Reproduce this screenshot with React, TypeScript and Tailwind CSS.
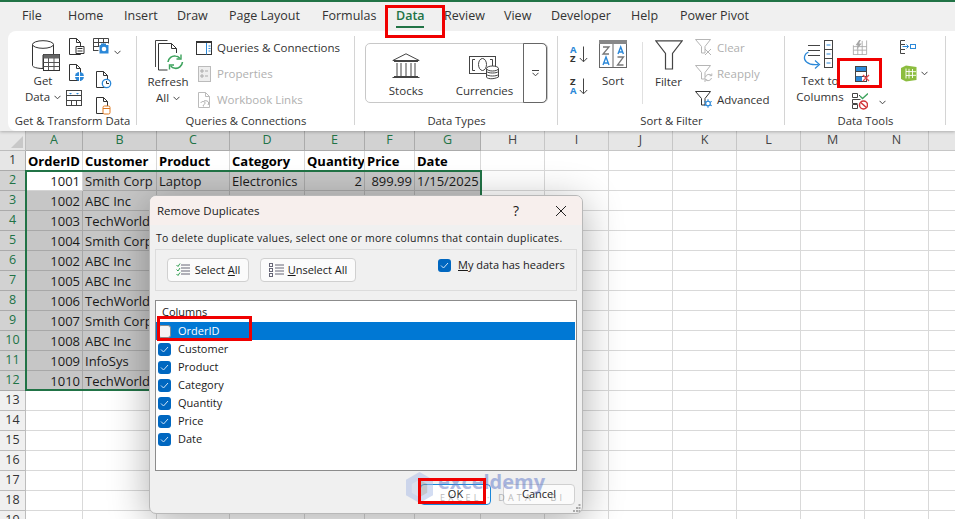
import React from "react";

const UI = "font-['Open_Sans','Noto_Sans',sans-serif]";

function Doc({ children, w = 17, h = 18 }: { children?: React.ReactNode; w?: number; h?: number }) {
  return (
    <svg width={w} height={h} viewBox="0 0 17 18" fill="none" className="block">
      <path d="M1.5 .5h7l4 4v12h-11z" fill="#fff" stroke="#333" />
      <path d="M8.5 .5v4h4" stroke="#333" />
      {children}
    </svg>
  );
}

const Dn = ({ c = "#444" }: { c?: string }) => (
  <svg width="7" height="5" viewBox="0 0 7 5" fill="none" className="inline-block">
    <path d="M.5 .8 3.5 3.8 6.5 .8" stroke={c} />
  </svg>
);

function Group({ w, label, children, border = true }: { w: number; label: string; children: React.ReactNode; border?: boolean }) {
  return (
    <div className="relative flex shrink-0 flex-col" style={{ width: w }}>
      <div className="flex h-[77px] shrink-0">{children}</div>
      <div className="text-center text-[11.3px] leading-[16px] text-[#333]">{label}</div>
      {border && <div className="absolute right-0 top-0 h-[89px] w-px bg-[#d4d4d4]" />}
    </div>
  );
}

const GetDataIcon = () => (
  <svg width="28" height="31" viewBox="0 0 28 31" fill="none">
    <path d="M.5 4.5v21c0 1.7 4.8 3 10.500 3V15h10.500V4.500" fill="#fff" stroke="#333" />
    <ellipse cx="11" cy="4.500" rx="10.500" ry="3.800" fill="#fff" stroke="#333" />
    <rect x="11.500" y="14.500" width="16" height="16" fill="#fff" stroke="#333" />
    <rect x="11.500" y="14.500" width="16" height="4" fill="#666" />
    <path d="M11.500 22.500h16M11.500 26.500h16M16.500 18v12M22 18v12" stroke="#555" />
  </svg>
);

const CameraTable = () => (
  <svg width="17" height="18" viewBox="0 0 17 18" fill="none">
    <path d="M.5 13V.5h15v5M.5 4.500h15M.5 8.500h6M5.500 .5v8M10.500 .5v5M.5 12.500h5" stroke="#444" />
    <rect x="6.500" y="7" width="9" height="8.500" fill="#2b88d8" />
    <circle cx="11" cy="11" r="2.300" fill="#fff" />
    <rect x="8" y="5.500" width="5" height="2" fill="#2b88d8" />
  </svg>
);

const RefreshIcon = () => (
  <svg width="29" height="34" viewBox="0 0 29 34" fill="none">
    <path d="M.5 27V.5h12" stroke="#444" />
    <path d="M3.500 30V3.500h13l5 5V13" fill="#fff" stroke="#333" />
    <path d="M16.500 3.500v5h5" stroke="#333" />
    <path d="M3.500 30h9" stroke="#333" />
    <path d="M13 22c.5-4 4-6.500 7.500-6 1.800.2 3.200 1 4.300 2.200M27.500 22c-.4 4-4 6.800-7.500 6.300-1.800-.2-3.200-1-4.300-2.300" stroke="#3da35d" strokeWidth="1.600" />
    <path d="M26 14.500v4.500h-4.500M14.500 29.500V25H19" stroke="#3da35d" strokeWidth="1.400" />
  </svg>
);

const SortAZ = ({ flip }: { flip?: boolean }) => (
  <div className="relative flex h-[18px] w-[18px] items-center">
    <div className="flex w-[9px] flex-col font-bold text-[9.5px] leading-[9px]">
      <span className={flip ? "text-[#333]" : "text-[#2b88d8]"}>{flip ? "Z" : "A"}</span>
      <span className={flip ? "text-[#2b88d8]" : "text-[#333]"}>{flip ? "A" : "Z"}</span>
    </div>
    <svg width="9" height="17" viewBox="0 0 9 17" fill="none"><path d="M4.500 .5v15M.8 12l3.700 3.800L8.200 12" stroke="#444" /></svg>
  </div>
);

const SortIcon = () => (
  <svg width="28" height="28" viewBox="0 0 28 28" fill="none">
    <rect x=".5" y=".5" width="27" height="27" fill="#fff" stroke="#666" />
    <rect x="0" y="0" width="28" height="4" fill="#888" />
    <path d="M14 4v24" stroke="#666" />
    <path d="M4 7h6L4 14h6" stroke="#777" strokeWidth="1.300" />
    <path d="M19 14l2.700-7 2.700 7M20 12h3.400" stroke="#2b88d8" strokeWidth="1.400" />
    <path d="M4 25l3-8 3 8M5 23h4" stroke="#2b88d8" strokeWidth="1.400" />
    <path d="M18.500 17h6l-6 8h6" stroke="#777" strokeWidth="1.300" />
  </svg>
);

const Funnel = ({ c = "#444", w = 28, h = 30 }: { c?: string; w?: number; h?: number }) => (
  <svg width={w} height={h} viewBox="0 0 28 30" fill="none">
    <path d="M.8 .8h26.400L17.500 13.500V29h-7V13.500z" fill="#fff" stroke={c} strokeWidth="1.200" />
  </svg>
);

const SmallFunnel = ({ kind }: { kind: "clear" | "reapply" | "advanced" }) => (
  <svg width="18" height="18" viewBox="0 0 18 18" fill="none">
    <path d="M.5 .5h15L10 7.500V14H6.500V7.500z" fill="#fff" stroke={kind === "advanced" ? "#333" : "#b5b5b5"} />
    {kind === "clear" && <path d="M10 10l6 6M16 10l-6 6" stroke="#b5b5b5" />}
    {kind === "reapply" && <path d="M10.500 12a3.500 3.500 0 0 1 6-1.500M16.500 13a3.500 3.500 0 0 1-6 1.500M16.800 8.500v2.200h-2.200M10 17v-2.200h2.200" stroke="#b5b5b5" />}
    {kind === "advanced" && (
      <g stroke="#2b88d8" strokeWidth="1.100">
        <circle cx="13" cy="12.500" r="2.300" />
        <path d="M13 8.300v1.900M13 14.800v1.900M9.300 10.400l1.700 1M15 13.700l1.700 1M9.300 14.700l1.700-1M15 11.400l1.700-1" />
      </g>
    )}
  </svg>
);

const TextToCols = () => (
  <svg width="30" height="31" viewBox="0 0 30 31" fill="none">
    <path d="M5 5.500h12M5 10.500h12M5 15.500h12" stroke="#444" />
    <rect x="21.500" y=".5" width="8" height="27" fill="#fff" stroke="#444" />
    <path d="M21.500 9.500h8M21.500 18.500h8" stroke="#444" />
    <path d="M23.500 5h4M23.500 14h4M23.500 23h4" stroke="#2b88d8" />
    <path d="M5.500 12c-4.500 2-5.500 7-2 10 3 2.500 8 3 12 2.500" stroke="#2b88d8" strokeWidth="1.200" />
    <path d="M12 20.500l4.500 4-4.500 4" stroke="#2b88d8" strokeWidth="1.200" />
  </svg>
);

const FlashFill = () => (
  <svg width="16" height="17" viewBox="0 0 16 17" fill="none">
    <path d="M.5 7.500h15M.5 11.500h15M5.500 4v13M10.500 1v16M.5 16.500h15v-16M.5 6v11" stroke="#aaa" />
    <path d="M7 0 3 6h3L4 11l6-7H7l2-4z" fill="#a6a6a6" />
  </svg>
);

const RemoveDup = () => (
  <svg width="15" height="16" viewBox="0 0 15 16" fill="none">
    <rect x=".5" y=".5" width="11" height="15" fill="#fff" stroke="#444" />
    <rect x="1" y="1" width="10" height="4.500" fill="#2b88d8" />
    <path d="M.5 5.500h11M.5 10.500h11" stroke="#444" />
    <rect x="1" y="10.500" width="6" height="4.500" fill="#2b88d8" />
    <path d="M8 9l6 6M14 9l-6 6" stroke="#e5484d" strokeWidth="1.300" />
  </svg>
);

const Validate = () => (
  <svg width="16" height="17" viewBox="0 0 16 17" fill="none">
    <path d="M.5 .5h5v4h-5zM7 2.500h1M.5 6.500h8M.5 11.500h5v4h-5zM.5 6.500v4h5" stroke="#444" />
    <path d="M8 3l2.500 2.500L16 .5" stroke="#3da35d" strokeWidth="1.300" />
    <circle cx="11.500" cy="12" r="4" fill="#fff" stroke="#d13438" strokeWidth="1.500" />
    <path d="M8.800 9.500l5.500 5" stroke="#d13438" strokeWidth="1.500" />
  </svg>
);

const Consolidate = () => (
  <svg width="16" height="14" viewBox="0 0 16 14" fill="none">
    <path d="M5 .5H.5v4H5M5 9.500H.5v4H5M.5 4.500v5" stroke="#444" />
    <rect x="10.500" y="4.500" width="5" height="4" stroke="#2b88d8" />
    <path d="M2.500 6.500h6M6.500 4.500l2 2-2 2" stroke="#2b88d8" />
  </svg>
);

const PowerCube = () => (
  <svg width="17" height="17" viewBox="0 0 17 17" fill="none">
    <path d="M1 3l5-2.500 10.500 1.500v13L6 16.500 1 14z" fill="#8cbd3f" />
    <path d="M6 3.500v10M9 3.800v9.700M12.500 4v9M6 6.500l10 .2M6 10.500l10-.2" stroke="#fff" strokeWidth=".9" />
  </svg>
);

const Bank = () => (
  <svg width="28" height="25" viewBox="0 0 28 25" fill="none">
    <path d="M14 .8 .8 7.500h26.400zM2 8.500h24M2 23.500h24M.5 24.500h27M5 10v13M9 10v13M14 10v13M19 10v13M23 10v13" stroke="#444" />
  </svg>
);

const Currency = () => (
  <svg width="31" height="25" viewBox="0 0 31 25" fill="none">
    <rect x=".5" y=".5" width="26" height="17" fill="#fff" stroke="#444" />
    <path d="M6 3.500H3.500v11H6M21 3.500h2.500v7" stroke="#444" />
    <ellipse cx="13.500" cy="8.500" rx="4" ry="6" stroke="#444" />
    <path d="M17.500 12.500v8.500c0 1.500 6 3 12 0v-8.500" fill="#fff" stroke="#444" />
    <ellipse cx="23.500" cy="12.500" rx="6" ry="2.500" fill="#fff" stroke="#444" />
    <path d="M17.500 15.500c2 2 10 2 12 0M17.500 18.500c2 2 10 2 12 0" stroke="#444" />
  </svg>
);

function SmallBtn({ icon, text, disabled }: { icon: React.ReactNode; text: string; disabled?: boolean }) {
  return (
    <div className={`flex h-[26px] shrink-0 items-center gap-[4px] text-[11.5px] ${disabled ? "text-[#b0b0b0]" : "text-[#333]"}`}>
      <div className="flex w-[18px] justify-center">{icon}</div>
      <span className="whitespace-nowrap">{text}</span>
    </div>
  );
}

const Tabs: [string, number][] = [
  ["File", 46], ["Home", 56], ["Insert", 53], ["Draw", 52], ["Page Layout", 93], ["Formulas", 74], ["Data", 48],
  ["Review", 60], ["View", 47], ["Developer", 80], ["Help", 49], ["Power Pivot", 80],
];

function Ribbon() {
  return (
    <div className="relative z-10 bg-[#f0f0f0] shadow-[0_1px_3px_rgba(0,0,0,0.25)]">
      <div className="flex h-[31px] items-center border-t-2 border-[#217346] pl-[22px] text-[12.5px] text-[#333]">
        {Tabs.map(([t, w]) => (
          <div key={t} className={`relative shrink-0 ${t === "Data" ? "font-semibold text-[#217346]" : ""}`} style={{ width: w }}>
            {t}
            {t === "Data" && <div className="absolute left-0 top-[19px] h-[2px] w-[28px] bg-[#217346]" />}
          </div>
        ))}
      </div>
      <div className="ml-[8px] flex h-[100px] rounded-l-[8px] bg-white pt-[5px]">
        <Group w={129} label="Get & Transform Data">
          <div className="ml-[13px] mt-[4px] flex w-[44px] flex-col items-center text-[11.5px] leading-[16px] text-[#333]">
            <div className="ml-[5px]"><GetDataIcon /></div>
            <div className="mt-[2px]">Get</div>
            <div className="flex items-center gap-1">Data <Dn /></div>
          </div>
          <div className="ml-[3px] flex w-[25px] flex-col items-start gap-[8px] pt-[2px]">
            <Doc><path d="M8 8.500h8v7H8z" fill="#fff" stroke="#333" /><path d="M9.500 10.500h5M9.500 13h5" stroke="#333" /></Doc>
            <Doc><circle cx="11.500" cy="12.500" r="4.500" fill="#2b88d8" /><path d="M7 12.500h9M11.500 8v9" stroke="#fff" /></Doc>
            <svg width="16" height="17" viewBox="0 0 16 17" fill="none" className="-ml-[2px]">
              <rect x=".5" y=".5" width="15" height="15" stroke="#444" fill="#fff" />
              <path d="M.5 5.500h15M.5 10.500h15M5.500 10.500v5M10.500 10.500v5" stroke="#444" />
              <path d="M3 3h3l-1.500 1.500zM10 3h3l-1.500 1.500z" fill="#2b88d8" />
            </svg>
          </div>
          <div className="flex flex-col items-start gap-[8px] pt-[2px]">
            <div className="flex items-start gap-[4px]"><CameraTable /><div className="mt-[1px]"><Dn /></div></div>
            <div className="ml-[2px]"><Doc><circle cx="11.500" cy="12.500" r="4.200" fill="#fff" stroke="#2b88d8" strokeWidth="1.300" /><path d="M11.500 10v2.500h2.500" stroke="#333" /></Doc></div>
            <div className="ml-[2px]"><Doc><rect x="8" y="9" width="7" height="8" rx="1.500" fill="#fff" stroke="#e07a1f" /><path d="M8 11.500h7" stroke="#e07a1f" /></Doc></div>
          </div>
        </Group>
        <Group w={218} label="Queries & Connections">
          <div className="ml-[11px] flex w-[40px] flex-col items-center text-[11.5px] leading-[16px] text-[#333]">
            <div className="mt-[4px] ml-[2px]"><RefreshIcon /></div>
            <div className="whitespace-nowrap">Refresh</div>
            <div className="flex items-center gap-1">All <Dn /></div>
          </div>
          <div className="-mt-px ml-[7px] flex flex-col">
            <SmallBtn text="Queries & Connections" icon={
              <svg width="16" height="14" viewBox="0 0 16 14" fill="none"><rect x=".5" y=".5" width="15" height="13" stroke="#333" /><rect x="0" y="0" width="16" height="2" fill="#333" /><path d="M10.500 2v11.500" stroke="#2b88d8" /><path d="M12.500 5h2M12.500 7.500h2M12.500 10h2" stroke="#2b88d8" /></svg>
            } />
            <SmallBtn disabled text="Properties" icon={
              <svg width="13" height="16" viewBox="0 0 13 16" fill="none"><rect x=".5" y=".5" width="12" height="15" fill="#eee" stroke="#bbb" /><path d="M3 4h2v2H3zM7 5h3M3 9h2v2H3zM7 10h3" stroke="#aaa" /></svg>
            } />
            <SmallBtn disabled text="Workbook Links" icon={
              <svg width="15" height="17" viewBox="0 0 15 17" fill="none"><path d="M1.500.5h7l4 4v11h-11z" stroke="#bbb" /><path d="M8.500.5v4h4" stroke="#bbb" /><path d="M4 11c0-2 4-2 4 0s-4 3-1 3M7 9c3-1 6 1 4 4" stroke="#aaa" /></svg>
            } />
          </div>
        </Group>
        <Group w={203} label="Data Types">
          <div className="ml-[10px] mt-[7px] flex h-[60px] w-[183px] rounded-[5px] border border-[#c8c8c8]">
            <div className="flex w-[80px] flex-col items-center pt-[9px] text-[11.5px] leading-[16px] text-[#333]">
              <Bank />
              <div className="mt-[5px]">Stocks</div>
            </div>
            <div className="flex w-[77px] flex-col items-center pt-[12px] text-[11.5px] leading-[16px] text-[#333]">
              <Currency />
              <div className="mt-[2px]">Currencies</div>
            </div>
            <div className="-mt-px -mb-px flex w-[24px] flex-col items-center justify-center rounded-r-[5px] border border-[#666]">
              <div className="mb-[1px] h-px w-[7px] bg-[#444]" />
              <Dn />
            </div>
          </div>
        </Group>
        <Group w={227} label="Sort & Filter">
          <div className="flex w-[83px]">
            <div className="ml-[12px] flex flex-col gap-[14px] pt-[9px]">
              <SortAZ />
              <SortAZ flip />
            </div>
            <div className="ml-[11px] flex flex-col items-center pt-[4px] text-[11.5px] text-[#333]">
              <SortIcon />
              <div className="mt-[4px]">Sort</div>
            </div>
          </div>
          <div className="relative flex w-[54px] flex-col items-center border-l border-transparent pt-[4px] text-[11.5px] text-[#333]">
            <div className="absolute left-0 top-[6px] h-[62px] w-px bg-[#e0e0e0]" />
            <Funnel />
            <div className="mt-[3px]">Filter</div>
          </div>
          <div className="-mt-px flex flex-col">
            <SmallBtn disabled text="Clear" icon={<SmallFunnel kind="clear" />} />
            <SmallBtn disabled text="Reapply" icon={<SmallFunnel kind="reapply" />} />
            <SmallBtn text="Advanced" icon={<SmallFunnel kind="advanced" />} />
          </div>
        </Group>
        <Group w={161} label="Data Tools">
          <div className="ml-[9px] flex w-[52px] flex-col items-center text-[11.5px] leading-[16px] text-[#333]">
            <div className="mr-[5px] mt-[4px]"><TextToCols /></div>
            <div className="mt-[2px] whitespace-nowrap">Text to</div>
            <div className="whitespace-nowrap">Columns</div>
          </div>
          <div className="ml-[4px] flex w-[38px] flex-col pt-[4px] pl-[2px]">
            <FlashFill />
            <div className="ml-[3px] mt-[11px]"><RemoveDup /></div>
            <div className="mt-[7px] flex items-center gap-[5px]"><Validate /><div className="ml-[6px]"><Dn /></div></div>
          </div>
          <div className="ml-[12px] flex flex-col gap-[11px] pt-[4px]">
            <Consolidate />
            <div className="flex items-center gap-[4px]"><PowerCube /><Dn /></div>
          </div>
        </Group>
        <div className="flex-1" />
      </div>
    </div>
  );
}

const cols = [57, 74, 73, 75, 60, 50, 66, 64, 64, 64, 64, 64, 64, 64, 64];
const letters = ["A", "B", "C", "D", "E", "F", "G", "H", "I", "J", "K", "L", "M", "N", ""];
const headers = ["OrderID", "Customer", "Product", "Category", "Quantity", "Price", "Date"];
const rows: [number, string][] = [
  [1001, "Smith Corp"], [1002, "ABC Inc"], [1003, "TechWorld"], [1004, "Smith Corp"], [1002, "ABC Inc"], [1005, "ABC Inc"],
  [1006, "TechWorld"], [1007, "Smith Corp"], [1008, "ABC Inc"], [1009, "InfoSys"], [1010, "TechWorld"],
];
const second = ["Laptop", "Electronics", "2", "899.99", "1/15/2025"];

function Sheet() {
  const cellText = "text-[13px] leading-[19px] font-['Open_Sans',sans-serif] text-[#1a1a1a]";
  const nRows = 19;
  return (
    <div className="relative">
      <div className="grid grid-cols-[26px_57px_74px_73px_75px_60px_50px_66px_64px_64px_64px_64px_64px_64px_64px_64px] auto-rows-[20px]">
        <div className="relative border-b border-r border-[#bdbdbd] bg-[#e6e6e6]">
          <div className="absolute bottom-[2px] right-[2px] h-0 w-0 border-b-[12px] border-l-[12px] border-b-[#c8c8c8] border-l-transparent" />
        </div>
        {letters.map((l, i) => (
          <div key={i} className={`flex items-center justify-center border-b border-r text-[12.5px] ${i < 7 ? "border-[#ababab] bg-[#d2d2d2] text-[#217346]" : "border-[#c6c6c6] bg-[#e6e6e6] text-[#444]"}`}>{l}</div>
        ))}
        {Array.from({ length: nRows }, (_, r) => {
          const n = r + 1;
          const inSel = n >= 2 && n <= 12;
          return (
            <React.Fragment key={n}>
              <div className={`flex items-center justify-center border-b border-r text-[12.5px] ${inSel ? "border-[#ababab] bg-[#d2d2d2] text-[#217346]" : n === 1 ? "border-[#ababab] bg-[#e6e6e6] text-[#333]" : "border-[#bdbdbd] bg-[#f0f0f0] text-[#333]"}`}>{n}</div>
              {cols.map((_, c) => {
                const isSel = inSel && c < 7;
                const isFirst = n === 2 && c === 0;
                let text: React.ReactNode = null;
                if (n === 1 && c < 7) text = <span className="font-bold text-black">{headers[c]}</span>;
                if (inSel && c === 0) text = rows[n - 2][0];
                if (inSel && c === 1) text = rows[n - 2][1];
                if (n === 2 && c >= 2 && c < 7) text = second[c - 2];
                const right = (inSel && c === 0) || (n === 2 && c >= 4 && c < 7);
                return (
                  <div key={c} className={`overflow-hidden whitespace-nowrap border-b border-r px-[2px] pt-px ${cellText} ${right ? "text-right" : ""} ${isFirst ? "border-[#d4d4d4] bg-white" : isSel ? "border-[#a8a8a8] bg-[#c6c6c6]" : "border-[#d9d9d9] bg-white"}`}>{text}</div>
                );
              })}
            </React.Fragment>
          );
        })}
      </div>
      <div className="pointer-events-none absolute left-[25px] top-[39px] h-[221px] w-[457px] border-2 border-[#217346]" />
    </div>
  );
}

const Check = ({ on = true }: { on?: boolean }) =>
  on ? (
    <div className="flex h-[13px] w-[13px] items-center justify-center rounded-[3px] bg-[#0067c0]">
      <svg width="9" height="7" viewBox="0 0 9 7" fill="none"><path d="M1 3.500 3.500 6 8 1" stroke="#cfe4f7" /></svg>
    </div>
  ) : (
    <div className="h-[13px] w-[13px] rounded-[3px] border border-[#8a8a8a] bg-[#f5f5f5]" />
  );

function Dialog() {
  const names = ["OrderID", "Customer", "Product", "Category", "Quantity", "Price", "Date"];
  return (
    <div className={`absolute left-[149px] top-[195px] z-20 h-[319px] w-[434px] overflow-hidden rounded-[7px] border border-[#b8b8b8] bg-[#f0f0f0] shadow-[0_8px_40px_rgba(0,0,0,0.32)] ${UI} text-[11px] text-[#1a1a1a]`}>
      <div className="flex h-[29px] items-center bg-[#f7efed] pl-[7px] pr-[15px] text-[11.5px]">
        <span className="flex-1">Remove Duplicates</span>
        <span className="mr-[36px] text-[14px]">?</span>
        <svg width="12" height="12" viewBox="0 0 12 12" fill="none"><path d="M1 1l10 10M11 1 1 11" stroke="#222" /></svg>
      </div>
      <div className="flex h-[24px] items-center whitespace-nowrap px-[6px] pt-[4px] text-[10.5px] tracking-[0.26px]">To delete duplicate values, select one or more columns that contain duplicates.</div>
      <div className="mx-[5px] flex h-[42px] items-start border border-[#dcdcdc] pl-[11px] pt-[8px]">
        <div className="flex h-[24px] w-[82px] items-center justify-center gap-[4px] rounded-[4px] border border-[#d0d0d0] bg-[#fbfbfb]">
          <svg width="15" height="14" viewBox="0 0 15 14" fill="none"><path d="M5 2h9M5 5h9M5 8h9M5 11h9" stroke="#667" /><path d="M.5 2l1.500 1.500L4 .5M.5 6.500 2 8l2-3M.5 11 2 12.500l2-3" stroke="#2e9c4e" /></svg>
          <span>Select <u>A</u>ll</span>
        </div>
        <div className="ml-[11px] flex h-[24px] w-[96px] items-center justify-center gap-[4px] rounded-[4px] border border-[#d0d0d0] bg-[#fbfbfb]">
          <svg width="15" height="14" viewBox="0 0 15 14" fill="none"><path d="M6 2h9M6 5h9M6 8h9M6 11h9" stroke="#667" /><rect x=".5" y=".5" width="3" height="3" stroke="#667" /><rect x=".5" y="5.500" width="3" height="3" stroke="#667" /><rect x=".5" y="10.500" width="3" height="3" stroke="#667" /></svg>
          <span><u>U</u>nselect All</span>
        </div>
        <div className="ml-[82px] flex -mt-[1px] items-center gap-[7px]">
          <Check />
          <span className="whitespace-nowrap"><u>M</u>y data has headers</span>
        </div>
      </div>
      <div className="mx-[5px] mt-[9px] h-[171px] border border-[#8c8c8c] bg-white pr-px">
        <div className="h-[21px] pl-[6px] pt-[3px] leading-[16px]">Columns</div>
        {names.map((n, i) => (
          <div key={n} className={`flex h-[18px] items-center pl-[2px] ${i === 0 ? "bg-[#0078d4] text-white" : ""}`}>
            <Check on={i > 0} />
            <span className="ml-[7px]">{n}</span>
          </div>
        ))}
      </div>
      <div className="mr-[7px] mt-[13px] flex justify-end gap-[12px]">
        <div className="flex h-[21px] w-[71px] items-center justify-center rounded-[4px] border border-[#1a86d9] bg-white">OK</div>
        <div className="flex h-[21px] w-[72px] items-center justify-center rounded-[4px] border border-[#d0d0d0] bg-[#fbfbfb]">Cancel</div>
      </div>
      <svg width="8" height="8" viewBox="0 0 8 8" className="absolute bottom-[1px] right-[1px]" fill="#aaa">
        <rect x="5.500" y="0" width="2" height="2" /><rect x="3" y="3" width="2" height="2" /><rect x="5.500" y="3" width="2" height="2" /><rect x="0" y="6" width="2" height="2" /><rect x="3" y="6" width="2" height="2" /><rect x="5.500" y="6" width="2" height="2" />
      </svg>
    </div>
  );
}

function Watermark() {
  return (
    <div className="pointer-events-none absolute left-[406px] top-[472px] z-30 flex items-start opacity-50">
      <svg width="27" height="31" viewBox="0 0 28 32">
        <path d="M14 0 28 8v16l-14 8L0 24V8z" fill="#a9bce8" />
        <path d="M14 8l8 4.500v9L14 26z" fill="#8a8f99" />
        <path d="M14 8 6 12.500v9L14 26z" fill="#c6d0ec" />
      </svg>
      <div className={`ml-[5px] ${UI}`}>
        <div className="text-[20px] font-bold leading-[20px] text-[#5f78c9]">exceldemy</div>
        <div className="mt-[1px] ml-[2px] whitespace-nowrap text-[9px] leading-[10px] tracking-[3.2px] text-[#777]">EXCEL · DATA · BI</div>
      </div>
    </div>
  );
}

const RedBox = ({ className }: { className: string }) => (
  <div className={`pointer-events-none absolute z-40 border-[3px] border-[#f00000] ${className}`} />
);

export default function App() {
  return (
    <div className={`relative h-[519px] w-[955px] overflow-hidden bg-white ${UI}`}>
      <Ribbon />
      <Sheet />
      <Dialog />
      <Watermark />
      <RedBox className="left-[385px] top-[5px] h-[33px] w-[60px]" />
      <RedBox className="left-[837px] top-[58px] h-[30px] w-[45px]" />
      <RedBox className="left-[157px] top-[316px] h-[25px] w-[95px]" />
      <RedBox className="left-[418px] top-[478px] h-[26px] w-[68px]" />
    </div>
  );
}
